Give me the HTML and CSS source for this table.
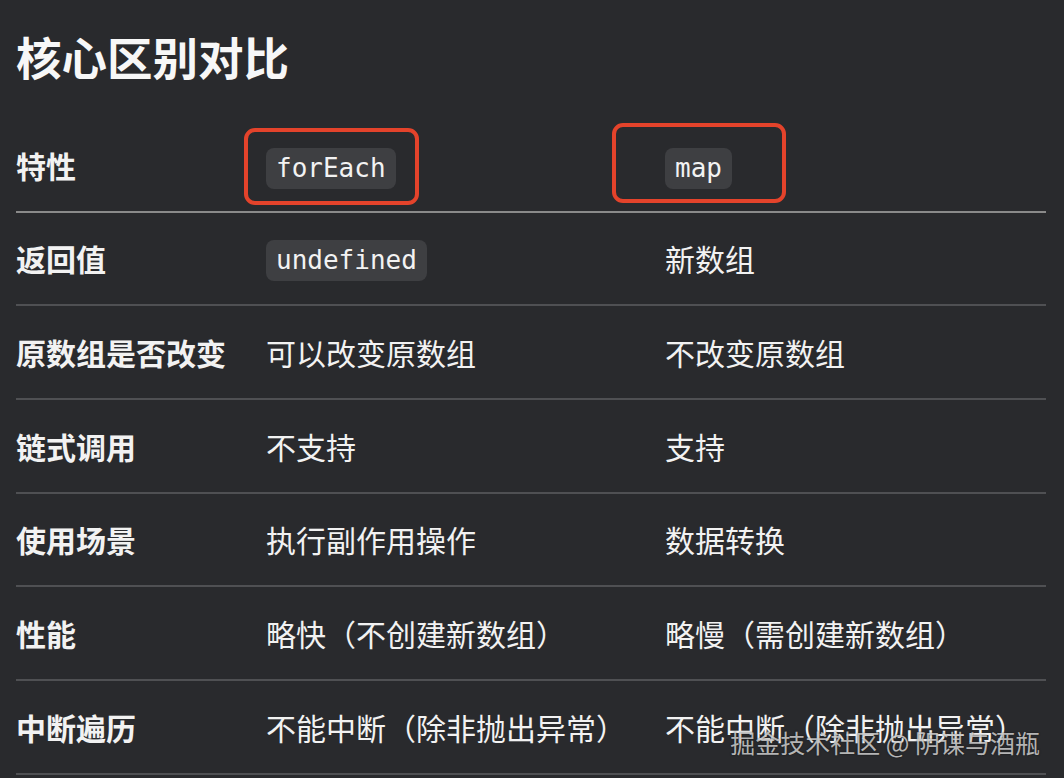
FILE: index.html
```html
<!DOCTYPE html>
<html lang="zh-CN">
<head>
<meta charset="utf-8">
<title>核心区别对比</title>
<link rel="stylesheet" href="styles.css">
</head>
<body>
<main class="page">
  <h1 class="title">核心区别对比</h1>
  <div class="table">
    <div class="row head">
      <div class="cell c1">特性</div>
      <div class="cell c2"><span class="mark mark-foreach"><code class="pill">forEach</code></span></div>
      <div class="cell c3"><span class="mark mark-map"><code class="pill">map</code></span></div>
    </div>
    <div class="row">
      <div class="cell c1">返回值</div>
      <div class="cell c2"><code class="pill">undefined</code></div>
      <div class="cell c3">新数组</div>
    </div>
    <div class="row">
      <div class="cell c1">原数组是否改变</div>
      <div class="cell c2">可以改变原数组</div>
      <div class="cell c3">不改变原数组</div>
    </div>
    <div class="row">
      <div class="cell c1">链式调用</div>
      <div class="cell c2">不支持</div>
      <div class="cell c3">支持</div>
    </div>
    <div class="row">
      <div class="cell c1">使用场景</div>
      <div class="cell c2">执行副作用操作</div>
      <div class="cell c3">数据转换</div>
    </div>
    <div class="row">
      <div class="cell c1">性能</div>
      <div class="cell c2">略快（不创建新数组）</div>
      <div class="cell c3">略慢（需创建新数组）</div>
    </div>
    <div class="row">
      <div class="cell c1">中断遍历</div>
      <div class="cell c2">不能中断（除非抛出异常）</div>
      <div class="cell c3">不能中断（除非抛出异常）</div>
    </div>
  </div>
  <div class="watermark">掘金技术社区 @ 阴谋与酒瓶</div>
</main>
</body>
</html>
```

FILE: styles.css
```css
* { box-sizing: border-box; }
html, body {
  margin: 0;
  padding: 0;
  background: #292a2d;
}
body {
  width: 1064px;
  height: 778px;
  overflow: hidden;
  font-family: "Noto Sans CJK SC", "Noto Sans", sans-serif;
  color: #f2f2f2;
}
.page {
  position: relative;
  height: 778px;
  padding: 0 18px 0 16px;
}
.title {
  margin: 0;
  padding-top: 29px;
  height: 119px;
  font-size: 45.5px;
  line-height: 54px;
  font-weight: 700;
  color: #f7f7f7;
}
.table {
  display: flex;
  flex-direction: column;
}
.row {
  display: grid;
  grid-template-columns: 250px 399px 1fr;
  align-items: center;
  height: 93.67px;
  border-bottom: 2px solid #4f5053;
  font-size: 30px;
  line-height: 40px;
}
.row.head {
  border-bottom-color: #8a8a8a;
}
.c1 {
  font-weight: 700;
}
.cell {
  white-space: nowrap;
}
.pill {
  display: inline-block;
  font-family: "DejaVu Sans Mono", "Liberation Mono", monospace;
  font-size: 26px;
  line-height: 41px;
  height: 41px;
  padding: 0 10px;
  border-radius: 8px;
  background: #3e3f42;
  color: #f2f2f2;
  vertical-align: middle;
}
.mark {
  position: relative;
  display: inline-block;
  vertical-align: middle;
}
.mark::after {
  content: "";
  position: absolute;
  border: 4px solid #e4432b;
  border-radius: 11px;
}
.mark-foreach::after {
  left: -22px;
  right: -23px;
  top: -15px;
  bottom: -16px;
}
.mark-map::after {
  left: -53px;
  right: -54px;
  top: -20px;
  bottom: -14px;
}
.watermark {
  position: absolute;
  right: 24px;
  bottom: 20px;
  font-size: 25px;
  line-height: 32px;
  color: rgba(225, 225, 225, 0.78);
  text-shadow: 0 0 2px rgba(0, 0, 0, 0.6);
  letter-spacing: 0;
}
```
